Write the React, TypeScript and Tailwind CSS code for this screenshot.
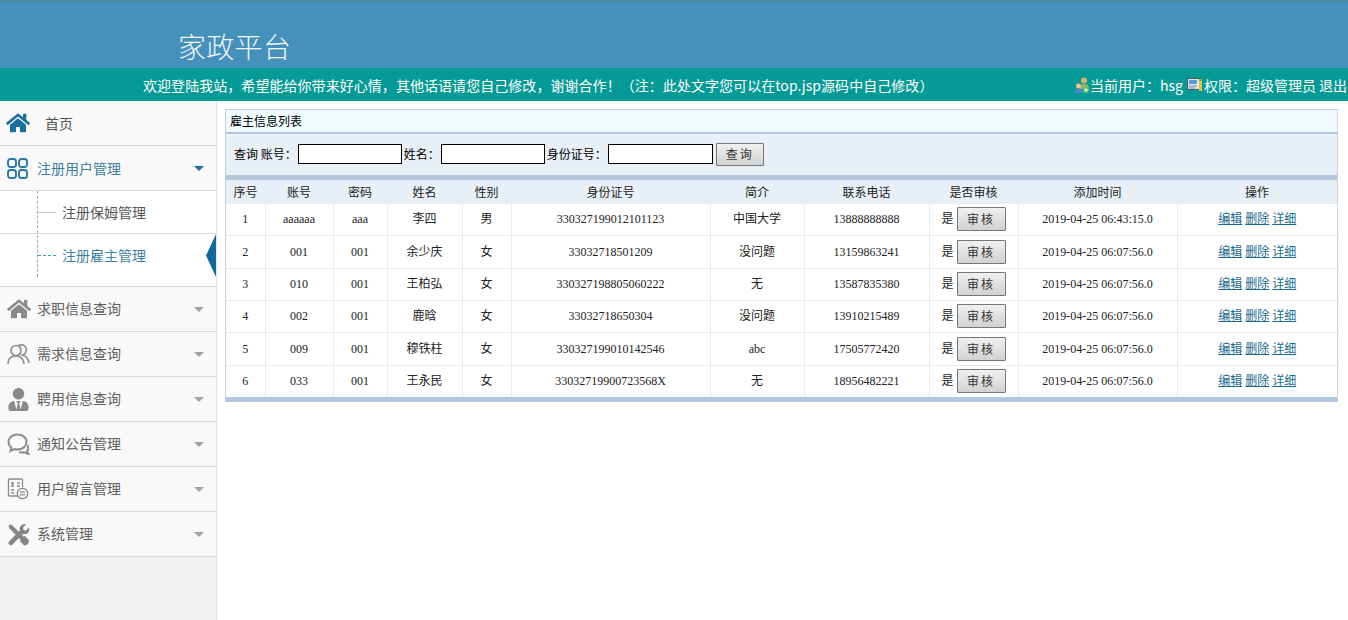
import { FaHome, FaUserTie } from 'react-icons/fa'
import type { ReactNode } from 'react'

const cjk = 'font-["Noto_Sans_CJK_SC","Liberation_Sans",sans-serif]'

const rows = [
  ['1', 'aaaaaa', 'aaa', '李四', '男', '330327199012101123', '中国大学', '13888888888', '2019-04-25 06:43:15.0', 'h-[31px]'],
  ['2', '001', '001', '余少庆', '女', '33032718501209', '没问题', '13159863241', '2019-04-25 06:07:56.0', 'h-[33px]'],
  ['3', '010', '001', '王柏弘', '女', '330327198805060222', '无', '13587835380', '2019-04-25 06:07:56.0', 'h-[32px]'],
  ['4', '002', '001', '鹿晗', '女', '33032718650304', '没问题', '13910215489', '2019-04-25 06:07:56.0', 'h-[32px]'],
  ['5', '009', '001', '穆铁柱', '女', '330327199010142546', 'abc', '17505772420', '2019-04-25 06:07:56.0', 'h-[33px]'],
  ['6', '033', '001', '王永民', '女', '33032719900723568X', '无', '18956482221', '2019-04-25 06:07:56.0', 'h-[32px]'],
]

const headers = ['序号', '账号', '密码', '姓名', '性别', '身份证号', '简介', '联系电话', '是否审核', '添加时间', '操作']

function Caret({ active }: { active?: boolean }) {
  return (
    <span
      className={`h-0 w-0 border-x-[5px] border-t-[5px] border-x-transparent ${active ? 'border-t-[#1d6f9c]' : 'border-t-[#a3a3a3]'}`}
    />
  )
}

function GridIcon() {
  return (
    <svg width="21" height="21" viewBox="0 0 21 21" fill="none" stroke="#2a7aa5" strokeWidth="1.9">
      <rect x="1" y="1" width="8" height="8" rx="2.5" />
      <rect x="12" y="1" width="8" height="8" rx="2.5" />
      <rect x="1" y="12" width="8" height="8" rx="2.5" />
      <rect x="12" y="12" width="8" height="8" rx="2.5" />
    </svg>
  )
}

function PeopleIcon() {
  return (
    <svg width="23" height="21" viewBox="0 0 23 21" fill="none" stroke="#8f8f8f" strokeWidth="1.7">
      <circle cx="9" cy="6.500" r="5" />
      <path d="M1 20c0-5 3-8 8-8s7.500 3 8 8" />
      <path d="M11.500 1.800c1-.7 2-1 3-1 2.800 0 4.800 2.300 4.800 5 0 2.500-1.500 4.500-3.800 5.200 3.500 1 6 4 6.500 8" />
    </svg>
  )
}

function ChatIcon() {
  return (
    <svg width="23" height="22" viewBox="0 0 23 22" fill="none" stroke="#8f8f8f" strokeWidth="2">
      <path d="M10.500 1.500c5 0 9 3.200 9 7.500s-4 7.500-9 7.500c-1.200 0-2.300-.2-3.300-.5L3.500 18l.8-3.500C2.300 13 1.500 11.200 1.500 9c0-4.300 4-7.500 9-7.500z" />
      <path d="M20.500 12c1 2.500.8 4.500-.5 6l1.500 3-4.500-1.800c-1.500.5-3.500.4-5-.2" />
    </svg>
  )
}

function MemoIcon() {
  return (
    <svg width="22" height="22" viewBox="0 0 22 22" fill="none" stroke="#8a8a8a" strokeWidth="1.3">
      <path d="M11 18H2.500a1 1 0 0 1-1-1V2a1 1 0 0 1 1-1h12a1 1 0 0 1 1 1v7" />
      <path d="M4 5h3M5.500 4v4M4 8h3M10 5h3M10 8h3M4 12h3M4 15h3" />
      <circle cx="15.500" cy="15.500" r="5.200" />
      <path d="M13 14.200h5M13 16.800h5" />
    </svg>
  )
}

function ToolsIcon() {
  return (
    <svg width="23" height="23" viewBox="0 0 23 23" fill="#858585">
      <path d="M1.500 3 3 1.500l2.500 1 11 11 1.500-.5 4 4.500-.5 2.500-2 2-2.500.500-4-4.500.5-1.500-11-11z" />
      <path d="M22 4.500c.7 2.500 0 4.500-1.500 5.700-1.300 1-2.800 1.100-4.300.6L5.500 21.500c-1 1-2.400 1-3.300.1-1-1-.9-2.300 0-3.300L13 7.500c-.6-1.600-.4-3.200.7-4.500C15 1.500 17 1 19 1.500l-3 3 .5 2.500 2.300.5z" />
    </svg>
  )
}

function MenuRow({ icon, label, muted = true }: { icon: ReactNode; label: string; muted?: boolean }) {
  return (
    <div className="flex h-[45px] items-center border-b border-[#d9d9d9] bg-[#f9f9f9] pl-[7px] pr-[12px]">
      <span className={`flex w-[30px] shrink-0 items-center justify-start ${muted ? 'text-[#8a8a8a]' : 'text-[#1d6f9c]'}`}>{icon}</span>
      <span className={`text-[14px] ${muted ? 'pb-px text-[#606060]' : 'text-[#3f7f9f]'}`}>{label}</span>
      <span className="ml-auto flex">
        <Caret active={!muted} />
      </span>
    </div>
  )
}

function Sidebar() {
  return (
    <aside className="w-[217px] shrink-0 border-r border-[#dfe3e6] bg-[#f1f1f1]">
      <div className="flex h-[45px] items-center border-b border-[#d9d9d9] bg-[#f9f9f9] pl-[6px]">
        <FaHome size={24} className="text-[#1d6f9c]" />
        <span className="ml-[15px] text-[14px] text-[#555]">首页</span>
      </div>
      <MenuRow icon={<GridIcon />} label="注册用户管理" muted={false} />
      <div className="relative bg-white">
        <div className="absolute bottom-[10px] left-[37px] top-0 border-l border-dashed border-[#8fb0c2]" />
        <div className="flex h-[43px] items-center border-b border-[#d9d9d9] pl-[38px]">
          <span className="mr-[6px] w-[18px] border-t border-[#c8c8c8]" />
          <span className="text-[14px] text-[#555]">注册保姆管理</span>
        </div>
        <div className="relative flex h-[53px] items-start border-b border-[#d9d9d9] pl-[38px] pt-[11px]">
          <span className="mr-[6px] mt-[10px] w-[18px] border-t border-dashed border-[#4f8fae]" />
          <span className="text-[14px] text-[#3f7f9f]">注册雇主管理</span>
          <span className="absolute left-[206px] top-0 h-[43px] w-[10px] bg-[#14699a] [clip-path:polygon(100%_0,0_50%,100%_100%)]" />
        </div>
      </div>
      <MenuRow icon={<FaHome size={24} />} label="求职信息查询" />
      <MenuRow icon={<PeopleIcon />} label="需求信息查询" />
      <MenuRow icon={<FaUserTie size={23} />} label="聘用信息查询" />
      <MenuRow icon={<ChatIcon />} label="通知公告管理" />
      <MenuRow icon={<MemoIcon />} label="用户留言管理" />
      <MenuRow icon={<ToolsIcon />} label="系统管理" />
    </aside>
  )
}

function UserIcon() {
  return (
    <svg width="16" height="17" viewBox="0 0 16 17" className="shrink-0">
      <circle cx="10" cy="3.500" r="3" fill="#d9b26a" />
      <path d="M5 12c0-4 2-5 5-5s5 1 5 5z" fill="#8fb36a" />
      <circle cx="4.500" cy="9" r="2.500" fill="#e8c49a" />
      <path d="M0 16c0-3 2-4.500 4.500-4.500S9 13 9 16z" fill="#4b87c9" />
      <circle cx="12" cy="13" r="3" fill="#5fbf6a" />
      <path d="M12 11.200v3.600M10.200 13h3.600" stroke="#fff" strokeWidth="1" />
    </svg>
  )
}

function RoleIcon() {
  return (
    <svg width="16" height="14" viewBox="0 0 16 14" className="shrink-0">
      <rect x="0.500" y="0.500" width="13" height="11" fill="#dfe8ef" stroke="#4c5a66" />
      <rect x="2" y="2" width="8" height="4" fill="#5b9bd5" />
      <path d="M2 8h8M2 10h6" stroke="#7a8894" />
      <rect x="12" y="3" width="3" height="10" fill="#e0c23c" />
      <rect x="12" y="1" width="3" height="2" fill="#6fae4f" />
    </svg>
  )
}

const btn = 'rounded-[1px] border border-[#777] bg-gradient-to-b from-[#f0f0f0] to-[#d2d2d2] text-[12px] tracking-[2px] text-[#333]'

export default function App() {
  return (
    <div className={`flex h-[620px] flex-col overflow-hidden bg-white ${cjk}`}>
      <header className="h-[68px] shrink-0 border-t border-[#5c8199] bg-[#4591bb] pl-[178px] pt-[25px]">
        <h1 className="text-[28px] font-light leading-[40px] tracking-[0.3px] text-[#f1f6f8]">家政平台</h1>
      </header>
      <div className="flex h-[33px] shrink-0 items-center whitespace-nowrap bg-[#069a96] pl-[143px] pt-px text-[14px] text-white">
        <span className="w-[931px] shrink-0 tracking-[0.05px]">欢迎登陆我站，希望能给你带来好心情，其他话语请您自己修改，谢谢合作！（注：此处文字您可以在top.jsp源码中自己修改）</span>
        <UserIcon />
        <span>当前用户：hsg</span>
        <span className="ml-[4px]"><RoleIcon /></span>
        <span className="ml-px">权限：超级管理员 退出</span>
      </div>
      <div className="flex min-h-0 flex-1">
        <Sidebar />
        <main className="flex-1 pl-[8px] pr-[10px] pt-[8px]">
          <div className="border-x border-t border-[#c3d2de] text-black">
            <div className="flex h-[24px] items-center border-b-[2px] border-[#b4c6dc] bg-[#effbff] pl-[4px] text-[12px]">雇主信息列表</div>
            <div className="flex h-[41px] items-center bg-[#e9eff6] pb-px pl-[8px] text-[12px]">
              <span>查询 账号：</span>
              <input className="ml-px h-[20px] w-[104px] border border-black bg-white" />
              <span className="ml-[2px]">姓名：</span>
              <input className="ml-px h-[20px] w-[104px] border border-black bg-white" />
              <span className="ml-[2px]">身份证号：</span>
              <input className="ml-px h-[20px] w-[105px] border border-black bg-white" />
              <button className={`ml-[3px] h-[23px] w-[48px] ${btn}`}>查询</button>
            </div>
            <div className="h-[5px] bg-[#b4c6dc]" />
            <table className="w-full table-fixed border-collapse text-center text-[12px]">
              <colgroup>
                <col className="w-[39px]" />
                <col className="w-[68px]" />
                <col className="w-[54px]" />
                <col className="w-[75px]" />
                <col className="w-[49px]" />
                <col className="w-[199px]" />
                <col className="w-[94px]" />
                <col className="w-[125px]" />
                <col className="w-[89px]" />
                <col className="w-[159px]" />
                <col />
              </colgroup>
              <thead>
                <tr className="h-[24px] bg-[#e9eff6]">
                  {headers.map((h) => (
                    <th key={h} className="p-0 font-normal text-[#222]">{h}</th>
                  ))}
                </tr>
              </thead>
              <tbody className='font-["Liberation_Serif","Noto_Sans_CJK_SC",serif] text-[#222]'>
                {rows.map((r) => (
                  <tr key={r[0]} className={`${r[9]} border-b border-[#e8ecef] last:border-b-0`}>
                    {r.slice(0, 8).map((v, i) => (
                      <td key={i} className="border-r border-[#e8ecef] p-0">{v}</td>
                    ))}
                    <td className="border-r border-[#e8ecef] p-0">
                      <span className="inline-flex items-center gap-[3px]">
                        是
                        <button className={`h-[24px] w-[49px] ${btn} ${cjk}`}>审核</button>
                      </span>
                    </td>
                    <td className="border-r border-[#e8ecef] p-0">{r[8]}</td>
                    <td className="p-0 text-[#1a6a8e]">
                      <a className="underline">编辑</a> <a className="underline">删除</a> <a className="underline">详细</a>
                    </td>
                  </tr>
                ))}
              </tbody>
            </table>
            <div className="h-[5px] bg-[#b4c6dc]" />
          </div>
        </main>
      </div>
    </div>
  )
}
